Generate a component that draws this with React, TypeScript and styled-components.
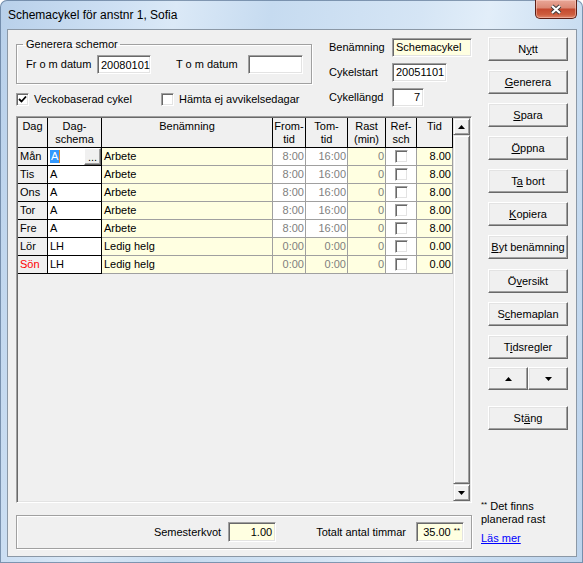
import React from "react";
import styled, { createGlobalStyle } from "styled-components";

const GlobalStyle = createGlobalStyle`
  html, body {
    margin: 0;
    padding: 0;
    background: #fff;
  }
  body {
    font-family: "Liberation Sans", Arial, sans-serif;
    font-size: 11px;
    color: #000;
  }
  * {
    box-sizing: border-box;
  }
`;

const Window = styled.div`
  width: 583px;
  height: 563px;
  display: flex;
  flex-direction: column;
  border-radius: 7px 7px 0 0;
  background: linear-gradient(
    100deg,
    #b8d0ea 0%,
    #cfe1f4 18%,
    #dbe9f7 26%,
    #c6dbf0 40%,
    #d5e5f5 62%,
    #e2eef9 72%,
    #c9ddf1 86%,
    #bcd3ec 100%
  );
  box-shadow: inset 0 0 0 1px rgba(58, 86, 120, 0.55);
`;

const TitleBar = styled.div`
  height: 29px;
  flex-shrink: 0;
  display: flex;
  align-items: flex-start;
  justify-content: space-between;
  padding: 0 6px 0 8px;
`;

const Title = styled.div`
  font-size: 12px;
  line-height: 15px;
  margin-top: 8px;
  color: #000;
`;

const CloseBtn = styled.div`
  width: 42px;
  height: 19px;
  border: 1px solid #5c1f16;
  border-top: none;
  border-radius: 0 0 5px 5px;
  background: linear-gradient(
    #e9a797 0%,
    #dc8a76 42%,
    #c54a30 52%,
    #cd5c3d 80%,
    #e0866a 100%
  );
  box-shadow: inset 0 0 0 1px rgba(255, 220, 210, 0.45);
  display: flex;
  align-items: center;
  justify-content: center;
`;

const Body = styled.div`
  flex: 1;
  display: flex;
  padding: 0 6px 6px 7px;
`;

const Client = styled.div`
  flex: 1;
  display: flex;
  background: #f0f0f0;
  border: 1px solid #8b98a6;
  padding: 7px 0 0 8px;
`;

const MainCol = styled.div`
  width: 456px;
  display: flex;
  flex-direction: column;
`;

const SideCol = styled.div`
  flex: 1;
  margin-left: 9px;
  display: flex;
  flex-direction: column;
  padding-bottom: 11px;
`;

const TopArea = styled.div`
  height: 79px;
  display: flex;
`;

const LeftTop = styled.div`
  width: 296px;
  display: flex;
  flex-direction: column;
`;

const Group = styled.fieldset`
  margin: 1px 0 0 0;
  min-width: 0;
  width: 296px;
  padding: 4px 8px 9px 9px;
  border: 1px solid #a0a0a0;
  box-shadow: inset 1px 1px 0 #fff, 1px 1px 0 #fff;
  display: flex;
  align-items: center;
`;

const Legend = styled.legend`
  margin-left: -3px;
  padding: 0 2px 0 3px;
  line-height: 13px;
`;

const Label = styled.span<{ $w?: number; $ml?: number }>`
  display: inline-block;
  width: ${(p) => (p.$w ? `${p.$w}px` : "auto")};
  margin-left: ${(p) => p.$ml ?? 0}px;
  white-space: nowrap;
  line-height: 13px;
`;

const Field = styled.div<{ $w: number; $h?: number; $bg?: string; $right?: boolean; $ml?: number }>`
  width: ${(p) => p.$w}px;
  height: ${(p) => p.$h ?? 19}px;
  margin-left: ${(p) => p.$ml ?? 0}px;
  background: ${(p) => p.$bg ?? "#fff"};
  border: 1px solid;
  border-color: #a0a0a0 #fff #fff #a0a0a0;
  box-shadow: inset 1px 1px 0 #696969, inset -1px -1px 0 #e3e3e3;
  display: flex;
  align-items: center;
  justify-content: ${(p) => (p.$right ? "flex-end" : "flex-start")};
  padding: 0 3px;
  white-space: nowrap;
  overflow: hidden;
`;

const CheckRow = styled.div`
  margin-top: 9px;
  display: flex;
  align-items: center;
`;

const CheckItem = styled.label<{ $w?: number }>`
  display: flex;
  align-items: center;
  width: ${(p) => (p.$w ? `${p.$w}px` : "auto")};
  gap: 5px;
  line-height: 13px;
`;

const Box = styled.span`
  width: 13px;
  height: 13px;
  flex-shrink: 0;
  background: #fff;
  border: 1px solid;
  border-color: #a0a0a0 #fff #fff #a0a0a0;
  box-shadow: inset 1px 1px 0 #696969, inset -1px -1px 0 #e3e3e3;
  display: flex;
  align-items: center;
  justify-content: center;
`;

const RightFields = styled.div`
  margin-left: 17px;
  display: flex;
  flex-direction: column;
  gap: 5px;
`;

const FieldRow = styled.div`
  height: 20px;
  display: flex;
  align-items: center;
`;

const TableBox = styled.div`
  height: 387px;
  display: flex;
  border: 1px solid;
  border-color: #a0a0a0 #fff #fff #a0a0a0;
  box-shadow: inset 1px 1px 0 #696969, inset -1px -1px 0 #e3e3e3;
  padding: 1px;
`;

const GridArea = styled.div`
  flex: 1;
  background: #f0f0f0;
`;

const Grid = styled.div`
  display: grid;
  grid-template-columns: 30px 54px 171px 33px 42px 38px 31px 36px;
  grid-template-rows: 30px;
  grid-auto-rows: 18px;
`;

const HeadCell = styled.div`
  background: #f0f0f0;
  border-right: 1px solid #000;
  border-bottom: 1px solid #000;
  text-align: center;
  white-space: pre-line;
  line-height: 13px;
  padding-top: 2px;
`;

const Cell = styled.div<{
  $bg?: string;
  $color?: string;
  $align?: "left" | "right" | "center";
  $dark?: boolean;
}>`
  background: ${(p) => p.$bg ?? "#fff"};
  color: ${(p) => p.$color ?? "#000"};
  border-right: 1px solid ${(p) => (p.$dark ? "#000" : "#a0a0a0")};
  border-bottom: 1px solid ${(p) => (p.$dark ? "#000" : "#a0a0a0")};
  display: flex;
  align-items: center;
  justify-content: ${(p) =>
    p.$align === "right" ? "flex-end" : p.$align === "center" ? "center" : "flex-start"};
  padding: ${(p) => (p.$align === "right" ? "0 1px 0 2px" : "0 2px")};
  white-space: nowrap;
  overflow: hidden;
  line-height: 13px;
`;

const EditCell = styled(Cell)`
  justify-content: space-between;
  padding: 0 0 0 2px;
`;

const Selected = styled.span`
  background: #3399ff;
  color: #fff;
  padding: 0 1px;
  border-right: 1px solid #e08a2a;
`;

const DotsBtn = styled.span`
  width: 17px;
  height: 17px;
  background: #f0f0f0;
  border: 1px solid;
  border-color: #fff #696969 #696969 #fff;
  box-shadow: inset -1px -1px 0 #a0a0a0;
  display: flex;
  align-items: center;
  justify-content: center;
  font-size: 11px;
  line-height: 11px;
  padding-top: 1px;
`;

const ScrollBar = styled.div`
  width: 17px;
  display: flex;
  flex-direction: column;
  background: #f0f0f0;
`;

const Raised = styled.div<{ $h?: number }>`
  height: ${(p) => (p.$h ? `${p.$h}px` : "auto")};
  flex: ${(p) => (p.$h ? "0 0 auto" : "1")};
  background: #f0f0f0;
  border: 1px solid;
  border-color: #e3e3e3 #696969 #696969 #e3e3e3;
  box-shadow: inset 1px 1px 0 #fff, inset -1px -1px 0 #a0a0a0;
  display: flex;
  align-items: center;
  justify-content: center;
`;

const BottomGroup = styled.div`
  margin-top: 12px;
  height: 34px;
  border: 1px solid #a0a0a0;
  box-shadow: inset 1px 1px 0 #fff, 1px 1px 0 #fff;
  display: flex;
  align-items: center;
  justify-content: flex-end;
  padding-right: 7px;
`;

const Btn = styled.div<{ $mt?: number }>`
  width: 80px;
  height: 24px;
  margin-left: 7px;
  margin-top: ${(p) => p.$mt ?? 9}px;
  background: #f0f0f0;
  border: 1px solid;
  border-color: #fff #696969 #696969 #fff;
  box-shadow: inset -1px -1px 0 #a0a0a0, inset 1px 1px 0 #e3e3e3;
  display: flex;
  align-items: center;
  justify-content: center;
  white-space: pre;
  line-height: 13px;
`;

const ArrowPair = styled.div`
  margin: 8px 0 0 7px;
  width: 80px;
  height: 23px;
  display: flex;
`;

const ArrowBtn = styled(Btn)`
  width: 40px;
  height: 23px;
  margin: 0;
`;

const Notes = styled.div`
  margin-top: auto;
  line-height: 13px;
`;

const Stars = styled.span`
  font-size: 8px;
  vertical-align: top;
  line-height: 9px;
`;

const Link = styled.div`
  margin-top: 6px;
  color: #0000ff;
  text-decoration: underline;
`;

const Tri = ({ up }: { up?: boolean }) => (
  <svg width="7" height="4" viewBox="0 0 7 4">
    <path d={up ? "M0 4 L3.5 0 L7 4 Z" : "M0 0 L3.5 4 L7 0 Z"} fill="#000" />
  </svg>
);

const Tick = () => (
  <svg width="9" height="9" viewBox="0 0 9 9">
    <path d="M1 4 L3.5 6.5 L8 1.5" stroke="#000" strokeWidth="1.8" fill="none" />
  </svg>
);

type Row = {
  day: string;
  sch: string;
  name: string;
  from: string;
  tom: string;
  tid: string;
  work: boolean;
  red?: boolean;
};

const rows: Row[] = [
  { day: "Mån", sch: "A", name: "Arbete", from: "8:00", tom: "16:00", tid: "8.00", work: true },
  { day: "Tis", sch: "A", name: "Arbete", from: "8:00", tom: "16:00", tid: "8.00", work: true },
  { day: "Ons", sch: "A", name: "Arbete", from: "8:00", tom: "16:00", tid: "8.00", work: true },
  { day: "Tor", sch: "A", name: "Arbete", from: "8:00", tom: "16:00", tid: "8.00", work: true },
  { day: "Fre", sch: "A", name: "Arbete", from: "8:00", tom: "16:00", tid: "8.00", work: true },
  { day: "Lör", sch: "LH", name: "Ledig helg", from: "0:00", tom: "0:00", tid: "0.00", work: false },
  { day: "Sön", sch: "LH", name: "Ledig helg", from: "0:00", tom: "0:00", tid: "0.00", work: false, red: true },
];

const YELLOW = "#ffffe1";
const GREY_TEXT = "#808080";

const headers = ["Dag", "Dag-\nschema", "Benämning", "From-\ntid", "Tom-\ntid", "Rast\n(min)", "Ref-\nsch", "Tid"];

export default function App() {
  return (
    <>
      <GlobalStyle />
      <Window>
        <TitleBar>
          <Title>Schemacykel för anstnr 1, Sofia</Title>
          <CloseBtn>
            <svg width="14" height="11" viewBox="0 0 14 11">
              <path d="M3 2 L11 9 M11 2 L3 9" stroke="#3a3a3a" strokeWidth="4" />
              <path d="M3 2 L11 9 M11 2 L3 9" stroke="#fff" strokeWidth="2.2" />
            </svg>
          </CloseBtn>
        </TitleBar>
        <Body>
          <Client>
            <MainCol>
              <TopArea>
                <LeftTop>
                  <Group>
                    <Legend>Generera schemor</Legend>
                    <Label $w={71}>Fr o m datum</Label>
                    <Field $w={54}>20080101</Field>
                    <Label $w={72} $ml={25}>T o m datum</Label>
                    <Field $w={55} />
                  </Group>
                  <CheckRow>
                    <CheckItem $w={145}>
                      <Box>
                        <Tick />
                      </Box>
                      Veckobaserad cykel
                    </CheckItem>
                    <CheckItem>
                      <Box />
                      Hämta ej avvikelsedagar
                    </CheckItem>
                  </CheckRow>
                </LeftTop>
                <RightFields>
                  <FieldRow>
                    <Label $w={63}>Benämning</Label>
                    <Field $w={80} $bg={YELLOW}>Schemacykel</Field>
                  </FieldRow>
                  <FieldRow>
                    <Label $w={63}>Cykelstart</Label>
                    <Field $w={55}>20051101</Field>
                  </FieldRow>
                  <FieldRow>
                    <Label $w={63}>Cykellängd</Label>
                    <Field $w={32} $right>7</Field>
                  </FieldRow>
                </RightFields>
              </TopArea>

              <TableBox>
                <GridArea>
                  <Grid>
                    {headers.map((h) => (
                      <HeadCell key={h}>{h}</HeadCell>
                    ))}
                    {rows.map((r, i) => {
                      const timeBg = r.work ? "#fff" : YELLOW;
                      return (
                        <React.Fragment key={r.day}>
                          <Cell $bg="#f0f0f0" $dark $color={r.red ? "#ff0000" : "#000"}>
                            {r.day}
                          </Cell>
                          {i === 0 ? (
                            <EditCell $dark>
                              <Selected>{r.sch}</Selected>
                              <DotsBtn>...</DotsBtn>
                            </EditCell>
                          ) : (
                            <Cell $dark>{r.sch}</Cell>
                          )}
                          <Cell $bg={YELLOW}>{r.name}</Cell>
                          <Cell $bg={timeBg} $color={GREY_TEXT} $align="right">
                            {r.from}
                          </Cell>
                          <Cell $bg={timeBg} $color={GREY_TEXT} $align="right">
                            {r.tom}
                          </Cell>
                          <Cell $bg={YELLOW} $color={GREY_TEXT} $align="right">
                            0
                          </Cell>
                          <Cell $align="center">
                            <Box />
                          </Cell>
                          <Cell $bg={YELLOW} $align="right">
                            {r.tid}
                          </Cell>
                        </React.Fragment>
                      );
                    })}
                  </Grid>
                </GridArea>
                <ScrollBar>
                  <Raised $h={17}>
                    <Tri up />
                  </Raised>
                  <Raised />
                  <Raised $h={17}>
                    <Tri />
                  </Raised>
                </ScrollBar>
              </TableBox>

              <BottomGroup>
                <Label>Semesterkvot</Label>
                <Field $w={48} $h={20} $bg={YELLOW} $right $ml={7}>
                  1.00
                </Field>
                <Label $ml={40}>Totalt antal timmar</Label>
                <Field $w={48} $h={20} $bg={YELLOW} $right $ml={10}>
                  <span>
                    35.00 <Stars>**</Stars>
                  </span>
                </Field>
              </BottomGroup>
            </MainCol>

            <SideCol>
              <Btn $mt={0}>
                <span>
                  N<u>y</u>tt
                </span>
              </Btn>
              <Btn>
                <span>
                  <u>G</u>enerera
                </span>
              </Btn>
              <Btn>
                <span>
                  <u>S</u>para
                </span>
              </Btn>
              <Btn>
                <span>
                  <u>Ö</u>ppna
                </span>
              </Btn>
              <Btn>
                <span>
                  T<u>a</u> bort
                </span>
              </Btn>
              <Btn>
                <span>
                  <u>K</u>opiera
                </span>
              </Btn>
              <Btn>
                <span>
                  <u>B</u>yt benämning
                </span>
              </Btn>
              <Btn $mt={10}>
                <span>
                  Ö<u>v</u>ersikt
                </span>
              </Btn>
              <Btn>
                <span>
                  S<u>c</u>hemaplan
                </span>
              </Btn>
              <Btn>
                <span>
                  T<u>i</u>dsregler
                </span>
              </Btn>
              <ArrowPair>
                <ArrowBtn>
                  <Tri up />
                </ArrowBtn>
                <ArrowBtn>
                  <Tri />
                </ArrowBtn>
              </ArrowPair>
              <Btn $mt={16}>
                <span>
                  St<u>ä</u>ng
                </span>
              </Btn>
              <Notes>
                <Stars>**</Stars> Det finns
                <br />
                planerad rast
                <Link>Läs mer</Link>
              </Notes>
            </SideCol>
          </Client>
        </Body>
      </Window>
    </>
  );
}
